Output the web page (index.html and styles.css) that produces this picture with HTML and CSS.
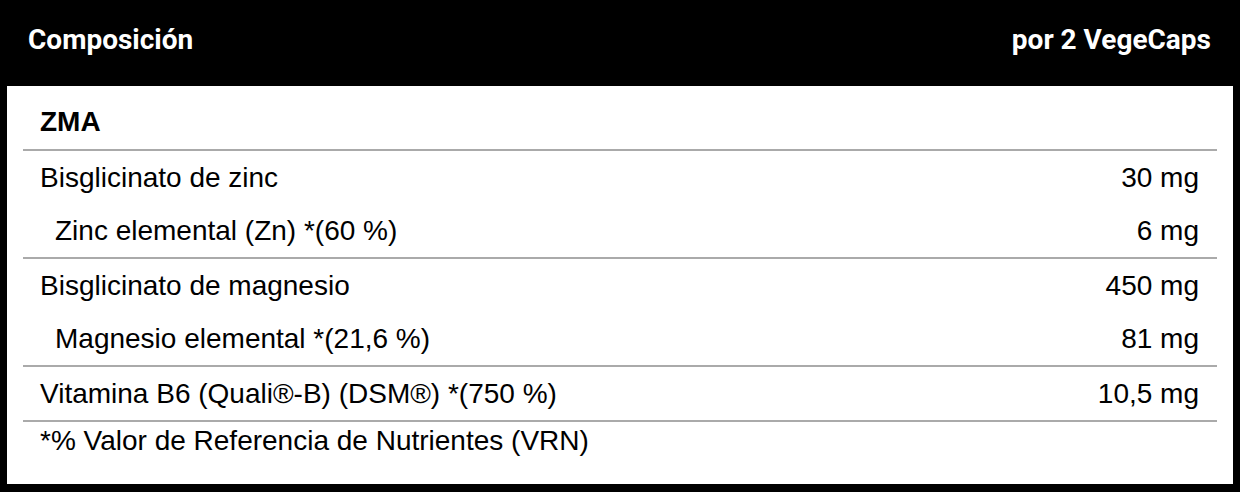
FILE: index.html
```html
<!DOCTYPE html>
<html lang="es">
<head>
<meta charset="utf-8">
<title>Composición</title>
<link rel="stylesheet" href="styles.css">
</head>
<body>
<div class="table">
  <div class="head">
    <span>Composición</span>
    <span>por 2 VegeCaps</span>
  </div>
  <div class="body">
    <div class="row title"><span>ZMA</span></div>
    <div class="group">
      <div class="row"><span>Bisglicinato de zinc</span><span>30 mg</span></div>
      <div class="row sub"><span>Zinc elemental (Zn) *(60 %)</span><span>6 mg</span></div>
    </div>
    <div class="group">
      <div class="row"><span>Bisglicinato de magnesio</span><span>450 mg</span></div>
      <div class="row sub"><span>Magnesio elemental *(21,6 %)</span><span>81 mg</span></div>
    </div>
    <div class="group">
      <div class="row"><span>Vitamina B6 (Quali®-B) (DSM®) *(750 %)</span><span>10,5 mg</span></div>
    </div>
    <div class="group">
      <div class="row foot"><span>*% Valor de Referencia de Nutrientes (VRN)</span></div>
    </div>
  </div>
</div>
</body>
</html>
```

FILE: styles.css
```css
* { box-sizing: border-box; }
html, body { margin: 0; padding: 0; background: #fff; }
.table {
  width: 1240px;
  height: 492px;
  border: 7px solid #000;
  border-top: 0;
  border-bottom-width: 8px;
  display: flex;
  flex-direction: column;
}
.head {
  height: 86px;
  background: #000;
  color: #fff;
  font-family: Roboto, "Liberation Sans", sans-serif;
  font-weight: 700;
  font-size: 28px;
  display: flex;
  justify-content: space-between;
  align-items: center;
  padding: 0 22px 8px 21px;
}
.body {
  padding: 8px 16px 0;
  font-family: "Liberation Sans", Arial, sans-serif;
  font-size: 28px;
  color: #000;
}
.group { border-top: 2px solid #aaa; }
.row {
  height: 53px;
  display: flex;
  justify-content: space-between;
  align-items: center;
  padding: 0 18px 0 17px;
}
.row.title { height: 55px; font-weight: 700; }
.sub { padding-left: 32px; }
.row.foot { height: 38px; }
```
